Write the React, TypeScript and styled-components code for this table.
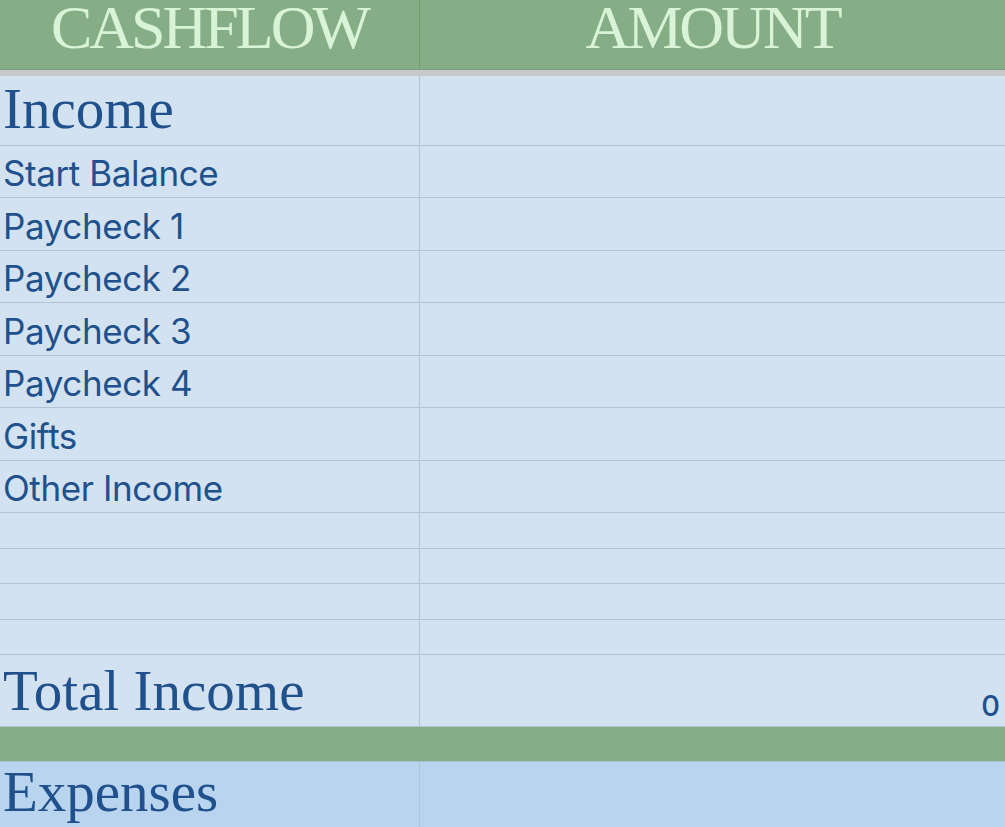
import React from 'react';
import styled, { createGlobalStyle } from 'styled-components';

// ─── Palette ──────────────────────────────────────────────────────────────────

const GREEN = '#86ae86';
const HEADER_TEXT = '#d9f3d7';
const ROW_BG = '#d3e2f1';
const EXP_BG = '#b9d4ef';
const GRID = '#b3c3d6';
const INK = '#21518c';

const Global = createGlobalStyle`
  html, body { margin: 0; padding: 0; background: ${ROW_BG}; overflow: hidden; }
  * { box-sizing: border-box; }
`;

// ─── Styled components ────────────────────────────────────────────────────────

const Sheet = styled.div`
  display: flex;
  flex-direction: column;
  width: 1005px;
  height: 827px;
  overflow: hidden;
  & > * { flex-shrink: 0; }
`;

const HeaderRow = styled.div`
  display: grid;
  grid-template-columns: 420px 1fr;
  height: 70px;
  background: ${GREEN};
  border-bottom: 1px solid #779f77;
`;

const HeaderCell = styled.div<{ $divider?: boolean }>`
  display: flex;
  align-items: flex-end;
  justify-content: center;
  padding-bottom: 13px;
  border-right: ${({ $divider }) => ($divider ? '1px solid #739c73' : 'none')};
  font-family: 'Liberation Serif', 'Times New Roman', serif;
  font-size: 62px;
  line-height: 0.9;
  letter-spacing: -3px;
  color: ${HEADER_TEXT};
`;

const GreyBar = styled.div`
  height: 6px;
  background: #c8c9ca;
`;

const Row = styled.div<{ $h: number; $bg?: string }>`
  display: grid;
  grid-template-columns: 420px 1fr;
  height: ${({ $h }) => $h}px;
  background: ${({ $bg }) => $bg || ROW_BG};
  border-bottom: 1px solid ${GRID};
`;

const Cell = styled.div<{ $kind?: 'title' | 'item'; $divider?: boolean; $pb?: number }>`
  display: flex;
  align-items: flex-end;
  padding-left: 3px;
  padding-bottom: ${({ $kind, $pb }) => $pb ?? ($kind === 'title' ? 7 : 6)}px;
  border-right: ${({ $divider }) => ($divider ? `1px solid ${GRID}` : 'none')};
  color: ${INK};
  white-space: nowrap;
  font-family: ${({ $kind }) =>
    $kind === 'title'
      ? "'Liberation Serif', 'Times New Roman', serif"
      : "Inter, 'Noto Sans', sans-serif"};
  font-size: ${({ $kind }) => ($kind === 'title' ? 57 : 35)}px;
  letter-spacing: ${({ $kind }) => ($kind === 'title' ? '0' : '-0.4px')};
  line-height: 1;
`;

const ValueCell = styled.div`
  display: flex;
  align-items: flex-end;
  justify-content: flex-end;
  padding-right: 5px;
  padding-bottom: 6px;
  font-family: Inter, 'Noto Sans', sans-serif;
  font-size: 29px;
  font-weight: 500;
  line-height: 1;
  color: ${INK};
`;

const Band = styled.div`
  height: 35px;
  background: ${GREEN};
  border-bottom: 1px solid #a9bfcf;
`;

// ─── Data ─────────────────────────────────────────────────────────────────────

const items: [string, number][] = [
  ['Start Balance', 52],
  ['Paycheck 1', 53],
  ['Paycheck 2', 52],
  ['Paycheck 3', 53],
  ['Paycheck 4', 52],
  ['Gifts', 53],
  ['Other Income', 52],
];

const blanks = [36, 35, 36, 35];

// ─── Component ────────────────────────────────────────────────────────────────

export default function App() {
  return (
    <>
      <Global />
      <Sheet>
        <HeaderRow>
          <HeaderCell $divider>CASHFLOW</HeaderCell>
          <HeaderCell>AMOUNT</HeaderCell>
        </HeaderRow>
        <GreyBar />

        <Row $h={70}>
          <Cell $kind="title" $divider $pb={8}>Income</Cell>
          <div />
        </Row>

        {items.map(([label, h]) => (
          <Row key={label} $h={h}>
            <Cell $kind="item" $divider>{label}</Cell>
            <div />
          </Row>
        ))}

        {blanks.map((h, i) => (
          <Row key={i} $h={h}>
            <Cell $divider />
            <div />
          </Row>
        ))}

        <Row $h={72}>
          <Cell $kind="title" $divider>Total Income</Cell>
          <ValueCell>0</ValueCell>
        </Row>

        <Band />

        <Row $h={90} $bg={EXP_BG}>
          <Cell $kind="title" $divider $pb={31}>Expenses</Cell>
          <div />
        </Row>
      </Sheet>
    </>
  );
}
